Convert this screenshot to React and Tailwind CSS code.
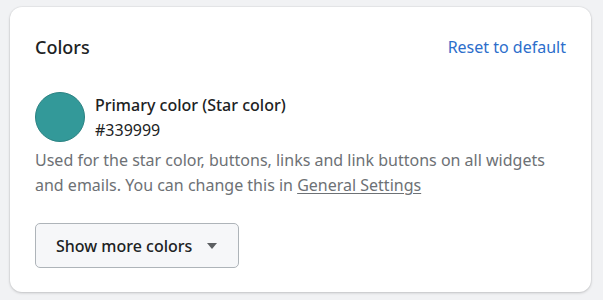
import React from 'react';

const ColorsCard = () => {
  return (
    <div className="rounded-xl bg-white px-[25px] pt-[28px] pb-[24px] shadow-[0_0_0_1px_rgba(0,0,0,0.03),0_1px_3px_rgba(0,0,0,0.18)]">
      <div className="flex items-center justify-between">
        <h2 className="text-[18px] font-medium leading-6 text-[#202223]">Colors</h2>
        <button className="text-[16px] leading-6 text-[#2c6ecb]">Reset to default</button>
      </div>
      <div className="mt-[33px] flex items-start gap-[10px]">
        <div className="h-[50px] w-[50px] shrink-0 rounded-full border border-[#2b8282] bg-[#339999]" />
        <div className="pt-px">
          <div className="text-[16px] font-medium leading-[25px] text-[#202223]">Primary color (Star color)</div>
          <div className="text-[16px] leading-[25px] text-[#202223]">#339999</div>
        </div>
      </div>
      <p className="mt-[5px] text-[16px] leading-[25px] text-[#6d7175]">
        Used for the star color, buttons, links and link buttons on all widgets and emails. You can change this in{' '}
        <a href="#" className="underline underline-offset-2">General Settings</a>
      </p>
      <button className="mt-[25px] flex h-[45px] items-center gap-[15px] rounded-[5px] border border-[#aeb4b9] bg-[#f6f7f9] pl-[20px] pr-[21px] text-[16px] font-medium text-[#202223]">
        Show more colors
        <svg width="10" height="6" viewBox="0 0 10 6" className="mt-px">
          <path d="M0 0h10L5 6z" fill="#5c5f62" />
        </svg>
      </button>
    </div>
  );
};

export default function App() {
  return (
    <div className="min-h-[300px] w-[603px] bg-[#f1f2f4] pl-[10px] pr-[12px] pt-[7px] pb-[9px]" style={{ fontFamily: '"Noto Sans", "Open Sans", Arial, sans-serif' }}>
      <ColorsCard />
    </div>
  );
}
